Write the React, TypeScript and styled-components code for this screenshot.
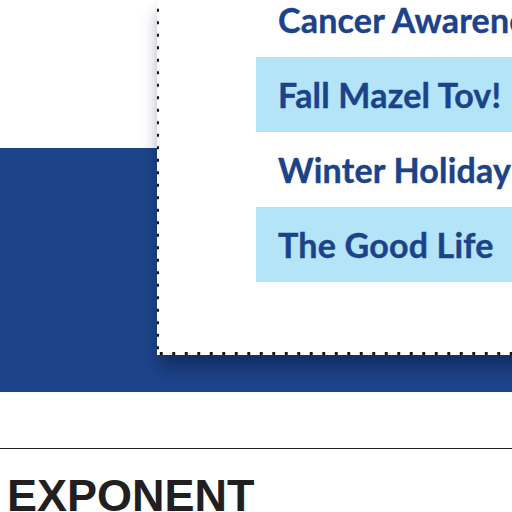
import styled, { createGlobalStyle } from "styled-components";

const GlobalStyle = createGlobalStyle`
  html, body {
    margin: 0;
    padding: 0;
    background: #ffffff;
  }
  body {
    width: 512px;
    height: 512px;
    overflow: hidden;
  }
`;

const Page = styled.div`
  width: 512px;
  height: 512px;
  overflow: hidden;
  background: #ffffff;
  display: flex;
  flex-direction: column;
`;

const Band = styled.section`
  flex-shrink: 0;
  margin-top: 148px;
  height: 244px;
  background: #1d4389;
  padding-left: 157px;
  display: flex;
  align-items: flex-start;
`;

const Card = styled.div`
  position: relative;
  margin-top: -148px;
  width: 420px;
  height: 355px;
  flex-shrink: 0;
  background: #ffffff;
  box-shadow: 3px 12px 16px rgba(8, 20, 50, 0.45);
  overflow: hidden;

  &::before {
    content: "";
    position: absolute;
    left: -2px;
    top: 0;
    bottom: 0;
    width: 5px;
    background-image: radial-gradient(circle, #151515 1.4px, transparent 2px);
    background-size: 5px 12.5px;
    background-position: 0 4px;
    background-repeat: repeat-y;
  }

  &::after {
    content: "";
    position: absolute;
    left: -2px;
    right: 0;
    bottom: -1px;
    height: 5px;
    background-image: radial-gradient(circle, #151515 1.4px, transparent 2px);
    background-size: 12.5px 5px;
    background-repeat: repeat-x;
  }
`;

const Menu = styled.ul`
  list-style: none;
  margin: -18px 0 0 99px;
  padding: 0;
  display: flex;
  flex-direction: column;
`;

const Item = styled.li<{ $active?: boolean }>`
  height: 75px;
  display: flex;
  align-items: center;
  padding-left: 22px;
  background: ${(p) => (p.$active ? "#b3e4f8" : "transparent")};
  color: #1c4289;
  font-family: "Lato", "Liberation Sans", sans-serif;
  font-weight: 700;
  font-size: 34px;
  letter-spacing: 0.2px;
  -webkit-text-stroke: 0.4px #1c4289;
  white-space: nowrap;
`;

const Footer = styled.footer`
  flex-shrink: 0;
  margin-top: 56px;
  border-top: 1px solid #222222;
  padding: 24px 0 0 7px;
`;

const Brand = styled.div`
  font-family: "Liberation Sans", Arial, sans-serif;
  font-weight: 700;
  font-size: 45px;
  line-height: 1;
  color: #231f20;
`;

const items = [
  { label: "Cancer Awareness", active: false },
  { label: "Fall Mazel Tov!", active: true },
  { label: "Winter Holiday", active: false },
  { label: "The Good Life", active: true },
];

export default function App() {
  return (
    <Page>
      <GlobalStyle />
      <Band>
        <Card>
          <Menu>
            {items.map((it) => (
              <Item key={it.label} $active={it.active}>
                {it.label}
              </Item>
            ))}
          </Menu>
        </Card>
      </Band>
      <Footer>
        <Brand>EXPONENT</Brand>
      </Footer>
    </Page>
  );
}
